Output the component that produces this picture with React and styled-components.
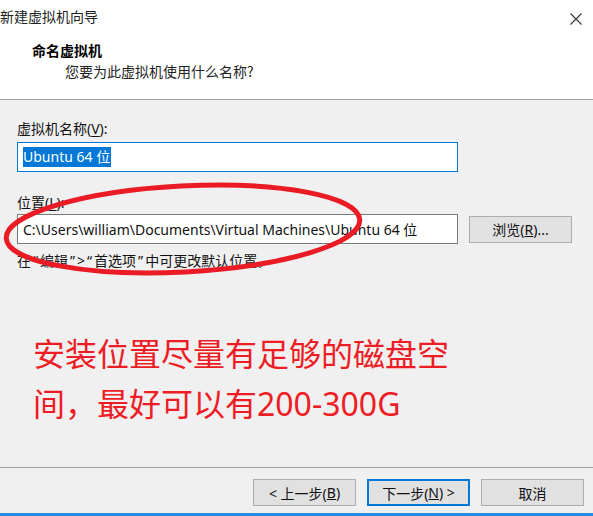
import styled, { createGlobalStyle } from 'styled-components';

const GlobalStyle = createGlobalStyle`
  html, body {
    margin: 0;
    padding: 0;
    background: #f0f0f0;
  }
  body {
    font-family: "Noto Sans", "Noto Sans CJK SC", sans-serif;
    font-size: 14px;
    color: #000;
  }
`;

export default function App() {
  return (
    <>
      <GlobalStyle />
      <StWindow>
        <StHeader>
          <StTitleBar>
            <StTitle>新建虚拟机向导</StTitle>
            <StClose>
              <svg width="12" height="12" viewBox="0 0 12 12">
                <path d="M0.5 0.5 L11.5 11.5 M11.5 0.5 L0.5 11.5" stroke="#333" strokeWidth="1.1" />
              </svg>
            </StClose>
          </StTitleBar>
          <StHeading>命名虚拟机</StHeading>
          <StSubHeading>您要为此虚拟机使用什么名称?</StSubHeading>
        </StHeader>

        <StBody>
          <StLabel>
            虚拟机名称(<u>V</u>):
          </StLabel>
          <StField $focused>
            <StSelected>Ubuntu 64 位</StSelected>
          </StField>

          <StLabel $top={21}>
            位置(<u>L</u>):
          </StLabel>
          <StFieldRow>
            <StField>C:\Users\william\Documents\Virtual Machines\Ubuntu 64 位</StField>
            <StButton $width={103}>
              浏览(<u>R</u>)...
            </StButton>
          </StFieldRow>
          <StHint>
            在<StQuote>“</StQuote>编辑<StQuote>”</StQuote>&gt;<StQuote>“</StQuote>首选项
            <StQuote>”</StQuote>中可更改默认位置。
          </StHint>

          <StNote>
            安装位置尽量有足够的磁盘空
            <br />
            间，最好可以有200-300G
          </StNote>
        </StBody>

        <StFooter>
          <StButton>
            &lt; 上一步(<u>B</u>)
          </StButton>
          <StButton $primary>
            下一步(<u>N</u>) &gt;
          </StButton>
          <StButton>取消</StButton>
        </StFooter>

        <StMark width="593" height="516" viewBox="0 0 593 516">
          <ellipse
            cx="183"
            cy="229"
            rx="177"
            ry="43"
            transform="rotate(-3 183 229)"
            fill="none"
            stroke="#ea1b24"
            strokeWidth="5"
          />
        </StMark>
      </StWindow>
    </>
  );
}

const StWindow = styled.div`
  position: relative;
  width: 593px;
  height: 516px;
  display: flex;
  flex-direction: column;
  background: #f0f0f0;
  border-bottom: 3px solid #2b8ae2;
  box-sizing: border-box;
  overflow: hidden;
`;

const StHeader = styled.div`
  height: 99px;
  background: #fff;
  border-bottom: 1px solid #a0a0a0;
  display: flex;
  flex-direction: column;
  flex-shrink: 0;
`;

const StTitleBar = styled.div`
  display: flex;
  justify-content: space-between;
  align-items: center;
  height: 20px;
  margin-top: 6px;
`;

const StTitle = styled.div`
  font-family: "Noto Sans CJK SC", sans-serif;
  font-size: 14px;
  line-height: 20px;
  color: #222;
`;

const StClose = styled.div`
  display: flex;
  margin-right: 11px;
  margin-top: 6px;
`;

const StHeading = styled.div`
  margin: 14px 0 0 32px;
  font-family: "Noto Sans CJK SC", sans-serif;
  font-weight: 700;
  font-size: 14px;
  line-height: 20px;
`;

const StSubHeading = styled.div`
  margin: 1px 0 0 65px;
  font-family: "Noto Sans CJK SC", sans-serif;
  font-size: 14px;
  line-height: 20px;
  color: #222;
`;

const StBody = styled.div`
  flex: 1;
  display: flex;
  flex-direction: column;
  padding: 0 0 0 17px;
`;

const StLabel = styled.div`
  margin-top: ${(p) => p.$top ?? 19}px;
  font-size: 14px;
  line-height: 20px;
  color: #111;

  u {
    text-underline-offset: 2px;
  }
`;

const StFieldRow = styled.div`
  display: flex;
  align-items: center;
  gap: 11px;
  margin-top: 1px;
`;

const StField = styled.div`
  width: 441px;
  height: 30px;
  box-sizing: border-box;
  background: #fff;
  border: 1px solid ${(p) => (p.$focused ? '#0078d7' : '#7a7a7a')};
  margin-top: ${(p) => (p.$focused ? '3px' : '0')};
  padding: 0 5px;
  display: flex;
  align-items: center;
  font-size: 14px;
  white-space: nowrap;
  overflow: hidden;
  color: #111;
`;

const StSelected = styled.span`
  background: #0078d7;
  color: #fff;
  line-height: 20px;
  padding-right: 1px;
`;

const StHint = styled.div`
  margin-top: 7px;
  font-size: 14px;
  line-height: 20px;
  color: #111;
  white-space: nowrap;
`;

const StQuote = styled.span`
  padding: 0 2px;
`;

const StNote = styled.div`
  margin: 58px 0 0 16px;
  font-family: "Noto Sans", "Noto Sans CJK SC", sans-serif;
  font-size: 32px;
  line-height: 50px;
  color: #ee1c25;
`;

const StFooter = styled.div`
  height: 46px;
  flex-shrink: 0;
  border-top: 1px solid #a0a0a0;
  display: flex;
  justify-content: flex-end;
  align-items: flex-start;
  gap: 11px;
  padding: 11px 9px 0 0;
  box-sizing: border-box;
`;

const StButton = styled.button`
  width: ${(p) => p.$width ?? 103}px;
  height: 27px;
  box-sizing: border-box;
  background: #e1e1e1;
  border: ${(p) => (p.$primary ? '2px solid #0078d7' : '1px solid #adadad')};
  font-family: "Noto Sans", "Noto Sans CJK SC", sans-serif;
  font-size: 14px;
  color: #111;
  padding: 0;
  display: flex;
  align-items: center;
  justify-content: center;
  flex-shrink: 0;
`;

const StMark = styled.svg`
  position: absolute;
  top: 0;
  left: 0;
  pointer-events: none;
`;
